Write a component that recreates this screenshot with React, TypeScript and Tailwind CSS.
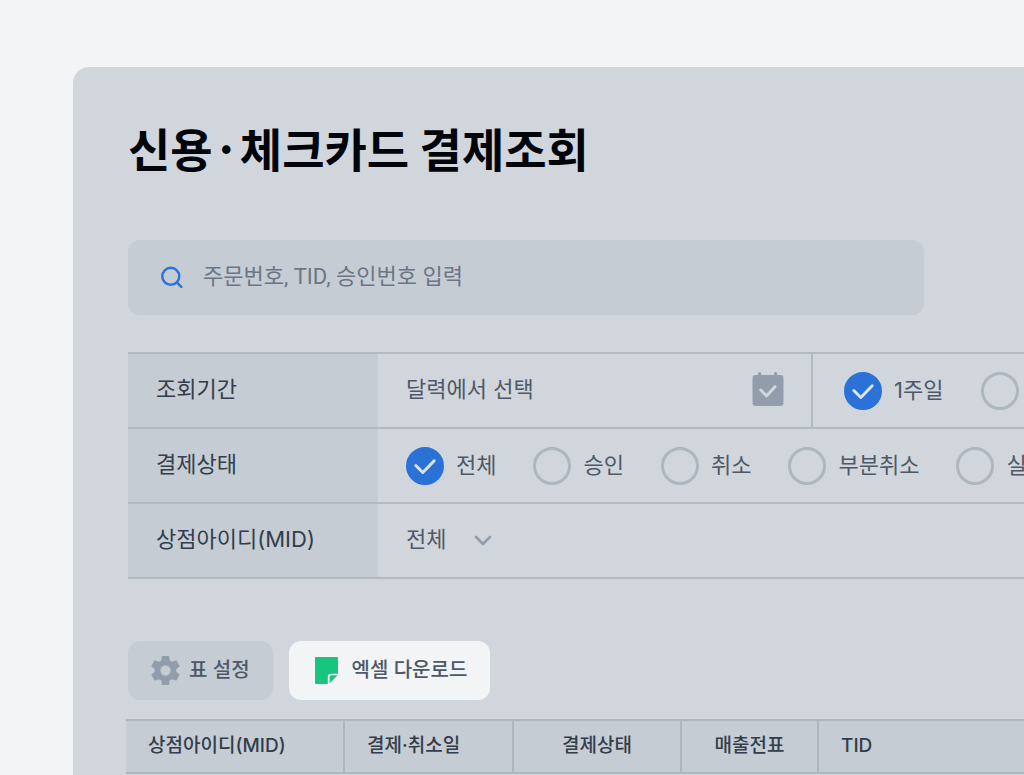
import { useState } from 'react';
import type { ReactNode } from 'react';

const PERIODS = ['1주일', '1개월'];
const STATUSES = ['전체', '승인', '취소', '부분취소', '실패'];

const COLUMNS = [
  { label: '상점아이디(MID)', className: 'w-[218px] text-left' },
  { label: '결제·취소일', className: 'w-[169px] border-l-2 text-left' },
  { label: '결제상태', className: 'w-[168px] border-l-2 text-center' },
  { label: '매출전표', className: 'w-[137px] border-l-2 text-center' },
  { label: 'TID', className: 'border-l-2 text-left' },
];

function SearchIcon() {
  return (
    <svg viewBox="0 0 22 22" className="size-[22px] shrink-0" fill="none" stroke="#2a72dc" strokeWidth="2.4" aria-hidden="true">
      <circle cx="9.8" cy="10.3" r="8.5" />
      <path d="M15.8 16.3l4.500 4.500" strokeLinecap="round" />
    </svg>
  );
}

function CalendarIcon() {
  return (
    <svg viewBox="0 0 32 34" className="h-[34px] w-8 shrink-0" aria-hidden="true">
      <rect x="6" y="0" width="3.200" height="6" rx="1.600" fill="#919daa" />
      <rect x="22" y="0" width="3.200" height="6" rx="1.600" fill="#919daa" />
      <rect x="0.500" y="3" width="31" height="31" rx="3" fill="#919daa" />
      <path d="M8.700 18l6 5.800 8.300-9" fill="none" stroke="#d1d6dd" strokeWidth="3" strokeLinecap="round" strokeLinejoin="round" />
    </svg>
  );
}

function GearIcon() {
  return (
    <svg viewBox="2 2 20 20" className="size-[29px] shrink-0" fill="#919daa" aria-hidden="true">
      <path d="M19.430 12.980c.040-.320.070-.640.070-.980s-.030-.660-.070-.980l2.110-1.650c.190-.150.240-.420.120-.640l-2-3.460c-.120-.220-.390-.300-.610-.220l-2.490 1c-.520-.400-1.080-.730-1.690-.980l-.380-2.650C14.460 2.180 14.250 2 14 2h-4c-.250 0-.460.180-.490.420l-.380 2.650c-.610.250-1.170.590-1.690.980l-2.490-1c-.230-.090-.490 0-.610.220l-2 3.460c-.130.220-.070.490.120.640l2.110 1.650c-.040.320-.070.650-.070.980s.030.660.070.980l-2.110 1.650c-.190.150-.240.420-.120.640l2 3.460c.120.220.390.300.610.220l2.490-1c.520.400 1.080.730 1.690.980l.380 2.650c.030.240.240.420.490.420h4c.250 0 .460-.180.490-.420l.380-2.650c.610-.250 1.170-.590 1.690-.980l2.490 1c.230.090.490 0 .610-.220l2-3.460c.120-.220.070-.490-.120-.640l-2.110-1.650zM12 15.500c-1.930 0-3.500-1.570-3.500-3.500s1.570-3.500 3.500-3.500 3.500 1.570 3.500 3.500-1.570 3.500-3.500 3.500z" />
    </svg>
  );
}

function SheetIcon() {
  return (
    <svg viewBox="0 0 23 27" className="h-[27px] w-[23px] shrink-0" fill="#17c57f" aria-hidden="true">
      <path d="M1 0h21a1 1 0 0 1 1 1v15.800h-7a3.200 3.200 0 0 0-3.200 3.200v7H1a1 1 0 0 1-1-1V1a1 1 0 0 1 1-1z" />
      <path d="M16.500 18.300H22.500L14.600 26.200V20.200a1.900 1.900 0 0 1 1.900-1.900z" />
    </svg>
  );
}

function RadioOption({
  name,
  label,
  checked,
  onSelect,
}: {
  name: string;
  label: string;
  checked: boolean;
  onSelect: () => void;
}) {
  return (
    <label className="flex shrink-0 cursor-pointer items-center gap-3">
      <span className="relative size-[38px]">
        <input
          type="radio"
          name={name}
          checked={checked}
          onChange={onSelect}
          className="block size-[38px] appearance-none rounded-full border-3 border-[#adb7c0] checked:border-[#2a71d8] checked:bg-[#2a71d8]"
        />
        {checked && (
          <svg viewBox="0 0 38 38" className="pointer-events-none absolute inset-0" fill="none" aria-hidden="true">
            <path d="M9.800 18.500l7 7L28.200 13.800" stroke="#dde4ec" strokeWidth="3" strokeLinecap="round" strokeLinejoin="round" />
          </svg>
        )}
      </span>
      <span className="pb-0.5">{label}</span>
    </label>
  );
}

function FilterRow({ label, children }: { label: ReactNode; children: ReactNode }) {
  return (
    <div className="flex h-[75px] border-t-2 border-[#b0bac3]">
      <div className="flex w-[250px] shrink-0 items-center bg-[#c5ccd4] pb-[3px] pl-7 text-[#333d4b]">{label}</div>
      <div className="flex min-w-0 flex-1 items-center pl-7 whitespace-nowrap">{children}</div>
    </div>
  );
}

export default function App() {
  const [period, setPeriod] = useState(PERIODS[0]);
  const [status, setStatus] = useState(STATUSES[0]);

  return (
    <div className="flex min-h-screen overflow-hidden bg-[#f2f4f6] pt-[67px] pl-[73px] font-['Inter','Noto_Sans_CJK_KR',sans-serif] text-[22px] leading-8 text-[#4e5968]">
      <main className="min-w-0 flex-1 overflow-hidden rounded-tl-2xl bg-[#d1d6dd] pt-[52px] pl-[55px]">
        <h1 className="font-['Noto_Sans_CJK_KR',sans-serif] text-[46px] leading-[56px] font-bold whitespace-nowrap text-[#02050a]">
          신용·체크카드 결제조회
        </h1>

        {/* Search */}
        <div className="mt-[65px] mr-[100px] flex h-[75px] items-center gap-5 rounded-xl bg-[#c5ccd4] px-[33px] pb-0.5">
          <SearchIcon />
          <input
            type="search"
            aria-label="결제 검색"
            placeholder="주문번호, TID, 승인번호 입력"
            className="min-w-0 flex-1 bg-transparent font-['Roboto','Noto_Sans_CJK_KR',sans-serif] outline-none placeholder:text-[#6b7684]"
          />
        </div>

        {/* Filters */}
        <section className="mt-[37px] border-b-2 border-[#b0bac3]">
          <FilterRow label="조회기간">
            <button type="button" className="flex w-[378px] shrink-0 items-center justify-between pb-[3px]">
              달력에서 선택
              <CalendarIcon />
            </button>
            <div className="ml-[27px] flex items-center gap-[38px] self-stretch border-l-2 border-[#b0bac3] pl-[31px]">
              {PERIODS.map((item) => (
                <RadioOption key={item} name="period" label={item} checked={period === item} onSelect={() => setPeriod(item)} />
              ))}
            </div>
          </FilterRow>
          <FilterRow label="결제상태">
            <div className="flex gap-[37px]">
              {STATUSES.map((item) => (
                <RadioOption key={item} name="status" label={item} checked={status === item} onSelect={() => setStatus(item)} />
              ))}
            </div>
          </FilterRow>
          <FilterRow label={<label htmlFor="mid">상점아이디(MID)</label>}>
            <div className="relative pb-[3px]">
              <select id="mid" className="w-[86px] appearance-none bg-transparent outline-none">
                <option>전체</option>
              </select>
              <svg viewBox="0 0 18 12" className="pointer-events-none absolute top-3 right-0 h-3 w-[18px]" fill="none" aria-hidden="true">
                <path d="M2 2l7 7 7-7" stroke="#919daa" strokeWidth="2.600" strokeLinecap="round" strokeLinejoin="round" />
              </svg>
            </div>
          </FilterRow>
        </section>

        {/* Table actions */}
        <div className="mt-[62px] flex gap-4 text-[20px] font-medium">
          <button type="button" className="flex h-[59px] items-center gap-[9px] rounded-xl bg-[#c5ccd4] px-[23px]">
            <GearIcon />
            <span className="pb-0.5">표 설정</span>
          </button>
          <button type="button" className="flex h-[59px] items-center gap-[14px] rounded-xl bg-[#f2f4f6] pr-[23px] pl-[26px]">
            <SheetIcon />
            <span className="pb-0.5">엑셀 다운로드</span>
          </button>
        </div>

        <div className="-ml-0.5 pt-[19px]">
          <table className="w-full table-fixed border-collapse text-[19px] text-[#333d4b]">
            <thead className="bg-[#c5ccd4]">
              <tr>
                {COLUMNS.map((column) => (
                  <th
                    key={column.label}
                    scope="col"
                    className={`h-[53px] border-y-2 border-[#adb7c0] px-[22px] pt-0 pb-0.5 font-medium whitespace-nowrap ${column.className}`}
                  >
                    {column.label}
                  </th>
                ))}
              </tr>
            </thead>
          </table>
        </div>
      </main>
    </div>
  );
}
